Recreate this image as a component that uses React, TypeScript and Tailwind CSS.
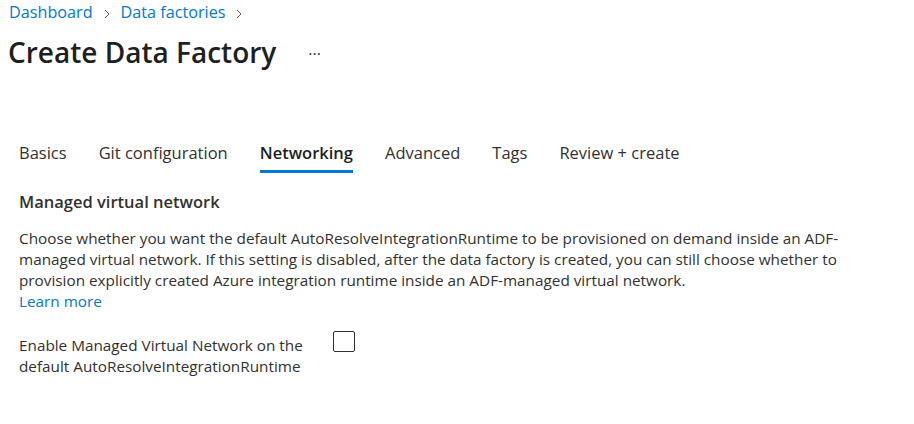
const tabs = ["Basics", "Git configuration", "Networking", "Advanced", "Tags", "Review + create"];

function Chevron() {
  return (
    <svg width="12" height="12" viewBox="0 0 12 12" className="mx-[8px] mt-[2px]">
      <path d="M4 2l4 4-4 4" fill="none" stroke="#605e5c" strokeWidth="1" />
    </svg>
  );
}

export default function App() {
  return (
    <div
      className="w-[914px] h-[424px] bg-white text-[#323130] overflow-hidden"
      style={{ fontFamily: '"Open Sans", "Noto Sans", sans-serif' }}
    >
      {/* Breadcrumb */}
      <nav className="flex items-center pl-[9px] pt-[1px] h-[24px] text-[16.2px] text-[#0078d4]">
        <a href="#">Dashboard</a>
        <Chevron />
        <a href="#">Data factories</a>
        <Chevron />
      </nav>

      {/* Title */}
      <div className="flex items-center pl-[8px] mt-[6px] h-[44px]">
        <h1 className="text-[28px] font-semibold text-[#201f1e]">Create Data Factory</h1>
        <span className="ml-[32px] mt-[4px] text-[16px] text-[#323130]">···</span>
      </div>

      {/* Tabs */}
      <div className="flex pl-[19px] mt-[68px] gap-[32px] text-[16.5px]">
        {tabs.map((t) => (
          <div key={t} className="flex flex-col">
            <span className={t === "Networking" ? "font-semibold text-[#201f1e] leading-[22px]" : "leading-[22px]"}>{t}</span>
            <div className={t === "Networking" ? "h-[3px] mt-[6px] bg-[#0078d4]" : "h-[3px] mt-[6px]"} />
          </div>
        ))}
      </div>

      {/* Section */}
      <div className="px-[19px] mt-[18px]">
        <h2 className="text-[16.5px] font-semibold leading-[22px]">Managed virtual network</h2>
        <p className="mt-[15px] text-[15.3px] leading-[21px] w-[840px]">
          Choose whether you want the default AutoResolveIntegrationRuntime to be provisioned on demand inside an ADF-managed virtual network. If this setting is disabled, after the data factory is created, you can still choose whether to provision explicitly created Azure integration runtime inside an ADF-managed virtual network.
          <br />
          <a href="#" className="text-[#0078d4]">Learn more</a>
        </p>

        <div className="flex mt-[19px]">
          <label className="w-[314px] text-[15.3px] leading-[21px] pt-[4px]">
            Enable Managed Virtual Network on the default AutoResolveIntegrationRuntime
          </label>
          <div className="w-[22px] h-[21px] border border-[#323130] rounded-[2px]" />
        </div>
      </div>
    </div>
  );
}
